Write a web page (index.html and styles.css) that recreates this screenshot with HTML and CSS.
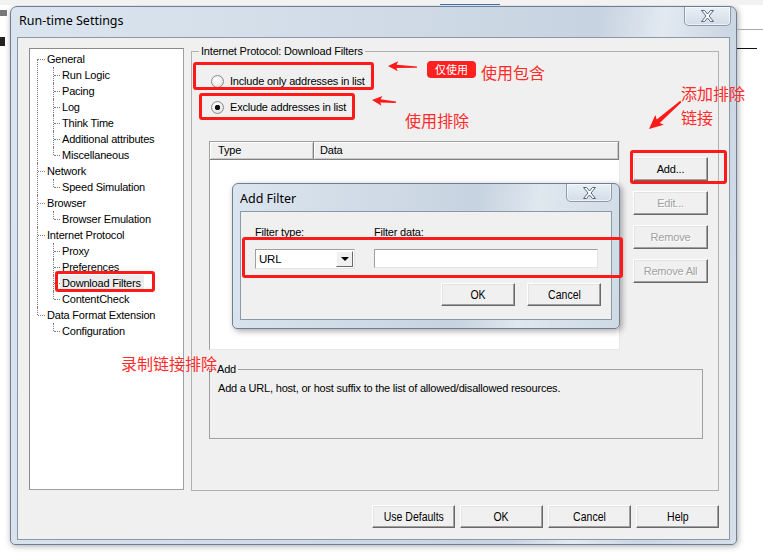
FILE: index.html
```html
<!DOCTYPE html>
<html lang="en">
<head>
<meta charset="utf-8">
<title>Run-time Settings</title>
<link rel="stylesheet" href="styles.css">
</head>
<body>
<div class="screen">
  <div class="bg-top"></div>
  <div class="bg-mark bg-mark1"></div>
  <div class="bg-mark bg-mark2"></div>
  <div class="bg-line bg-line1"></div>
  <div class="bg-line bg-line2"></div>
  <div class="bg-blue"></div>

  <div class="window">
    <div class="titlebar">
      <span class="title">Run-time Settings</span>
      <span class="close">
        <svg width="15" height="12" viewBox="0 0 15 12"><polygon points="1.5,0.5 4.5,0.5 7.5,4 10.5,0.5 13.5,0.5 9,6 13.5,11.5 10.5,11.5 7.5,8 4.5,11.5 1.5,11.5 6,6" fill="#fff" stroke="#55657a" stroke-width="1"/></svg>
      </span>
    </div>
    <div class="client">
      <div class="main">
        <div class="tree">
          <ul class="root">
            <li><span class="lbl">General</span>
              <ul class="sub">
                <li><span class="lbl">Run Logic</span></li>
                <li><span class="lbl">Pacing</span></li>
                <li><span class="lbl">Log</span></li>
                <li><span class="lbl">Think Time</span></li>
                <li><span class="lbl">Additional attributes</span></li>
                <li><span class="lbl">Miscellaneous</span></li>
              </ul>
            </li>
            <li><span class="lbl">Network</span>
              <ul class="sub">
                <li><span class="lbl">Speed Simulation</span></li>
              </ul>
            </li>
            <li><span class="lbl">Browser</span>
              <ul class="sub">
                <li><span class="lbl">Browser Emulation</span></li>
              </ul>
            </li>
            <li><span class="lbl">Internet Protocol</span>
              <ul class="sub">
                <li><span class="lbl">Proxy</span></li>
                <li><span class="lbl">Preferences</span></li>
                <li><span class="lbl selected">Download Filters</span></li>
                <li><span class="lbl">ContentCheck</span></li>
              </ul>
            </li>
            <li><span class="lbl">Data Format Extension</span>
              <ul class="sub">
                <li><span class="lbl">Configuration</span></li>
              </ul>
            </li>
          </ul>
        </div>

        <fieldset class="group">
          <legend>Internet Protocol: Download Filters</legend>
          <div class="radios">
            <div class="radio"><span class="dot"></span><span>Include only addresses in list</span></div>
            <div class="radio"><span class="dot checked"></span><span>Exclude addresses in list</span></div>
          </div>
          <div class="listrow">
            <div class="list">
              <div class="lhead">
                <div class="col col-type">Type</div>
                <div class="col col-data">Data</div>
              </div>
            </div>
            <div class="side">
              <div class="btn side-btn">Add...</div>
              <div class="btn side-btn disabled">Edit...</div>
              <div class="btn side-btn disabled">Remove</div>
              <div class="btn side-btn disabled">Remove All</div>
            </div>
          </div>
          <fieldset class="addgroup">
            <legend>Add</legend>
            <p class="desc">Add a URL, host, or host suffix to the list of allowed/disallowed resources.</p>
          </fieldset>
        </fieldset>
      </div>
      <div class="footer">
        <div class="btn foot-btn"><span class="narrow">Use Defaults</span></div>
        <div class="btn foot-btn"><span class="narrow">OK</span></div>
        <div class="btn foot-btn"><span class="narrow">Cancel</span></div>
        <div class="btn foot-btn"><span class="narrow">Help</span></div>
      </div>
    </div>
  </div>

  <div class="dialog">
    <div class="titlebar dtitlebar">
      <span class="title dtitle">Add Filter</span>
      <span class="close dclose">
        <svg width="15" height="12" viewBox="0 0 15 12"><polygon points="1.5,0.5 4.5,0.5 7.5,4 10.5,0.5 13.5,0.5 9,6 13.5,11.5 10.5,11.5 7.5,8 4.5,11.5 1.5,11.5 6,6" fill="#fff" stroke="#55657a" stroke-width="1"/></svg>
      </span>
    </div>
    <div class="dclient">
      <div class="fields">
        <span class="flabel">Filter <u>t</u>ype:</span>
        <span class="flabel">Filter <u>d</u>ata:</span>
        <div class="select"><span class="sval">URL</span><span class="sarrow"><span class="tri"></span></span></div>
        <div class="input"></div>
      </div>
      <div class="dbuttons">
        <div class="btn dbtn"><span class="narrow">OK</span></div>
        <div class="btn dbtn"><span class="narrow">Cancel</span></div>
      </div>
    </div>
  </div>

  <div class="mark box-include"></div>
  <div class="mark box-exclude"></div>
  <div class="mark box-tree"></div>
  <div class="mark box-add"></div>
  <div class="mark box-fields"></div>

  <div class="badge">仅使用</div>
  <div class="note note-include">使用包含</div>
  <div class="note note-exclude">使用排除</div>
  <div class="note note-add1">添加排除</div>
  <div class="note note-add2">链接</div>
  <div class="note note-record">录制链接排除</div>

  <svg class="arrows" width="763" height="560" viewBox="0 0 763 560">
    <g fill="#ff1a1a">
      <polygon transform="translate(388,66) rotate(2)" points="0,0 10,-5 8.5,-1.5 29,-0.6 29,0.8 8.5,1.7 10,5"/>
      <polygon transform="translate(372,100) rotate(5)" points="0,0 10,-5 8.5,-1.5 24,-0.6 24,0.8 8.5,1.7 10,5"/>
      <polygon transform="translate(649,129) rotate(-41)" points="0,0 14,-6.5 12,-2 42,-0.8 42,1.2 12,2.6 14,6.5"/>
    </g>
  </svg>
</div>
</body>
</html>
```
FILE: styles.css
```css
html, body {
  margin: 0;
  padding: 0;
  background: #ffffff;
}

.screen {
  position: relative;
  width: 763px;
  height: 560px;
  overflow: hidden;
  box-sizing: border-box;
  padding: 6px 0 0 10px;
  font-family: "Liberation Sans", Arial, sans-serif;
  font-size: 11px;
  letter-spacing: -0.2px;
  color: #000;
}

/* background fragments of other windows */
.bg-top {
  position: absolute;
  left: 0; top: 0;
  width: 763px; height: 5px;
  background: #f2f2f2;
}
.bg-blue {
  position: absolute;
  left: 440px; top: 4px;
  width: 60px; height: 1px;
  background: #3d6fb0;
}
.bg-mark {
  position: absolute;
  background: #444;
}
.bg-mark1 { left: 0; top: 10px; width: 7px; height: 6px; background: #777; }
.bg-mark2 { left: 0; top: 37px; width: 5px; height: 9px; background: #222; }
.bg-line {
  position: absolute;
  left: 737px;
  width: 26px;
  height: 1px;
}
.bg-line1 { top: 29px; background: #a8a8a8; }
.bg-line2 { top: 48px; background: #111; width: 20px; }

/* main window */
.window {
  width: 727px;
  height: 539px;
  box-sizing: border-box;
  border: 1px solid #6f7e90;
  border-radius: 7px 7px 5px 5px;
  background: linear-gradient(100deg, #dbe5ef 0%, #d0dbe7 45%, #c7d3e0 72%, #e2e9f1 80%, #cbd7e3 88%, #d6e0ea 100%);
  box-shadow: 1px 1px 6px rgba(0, 0, 0, 0.35);
  display: flex;
  flex-direction: column;
}

.titlebar {
  height: 30px;
  flex: none;
  display: flex;
  justify-content: space-between;
  align-items: flex-start;
}

.title {
  font-family: "Noto Sans", "Open Sans", sans-serif;
  font-size: 12.5px;
  letter-spacing: 0;
  line-height: 16px;
  padding: 6px 0 0 8px;
  color: #000;
}

.close {
  width: 47px;
  height: 19px;
  box-sizing: border-box;
  margin-right: 5px;
  border: 1px solid #8d9aaa;
  border-top: none;
  border-radius: 0 0 5px 5px;
  background: linear-gradient(#e9eff6, #d3dde8);
  box-shadow: inset 0 0 0 1px rgba(255, 255, 255, 0.6);
  display: flex;
  align-items: center;
  justify-content: center;
}

.client {
  flex: 1;
  margin: 0 6px 4px 6px;
  border: 1px solid #8b98a7;
  background: #f0f0f0;
  padding: 7px 0 0 11px;
  display: flex;
  flex-direction: column;
}

.main {
  display: flex;
  align-items: flex-start;
}

/* tree */
.tree {
  width: 155px;
  height: 442px;
  box-sizing: border-box;
  margin-top: 3px;
  background: #fff;
  border: 1px solid #a0a0a0;
  border-top-color: #8a8a8a;
  border-left-color: #8a8a8a;
  padding: 2px 0 0 7px;
}

.tree ul {
  list-style: none;
  margin: 0;
  padding: 0;
}

.tree li {
  position: relative;
  line-height: 16px;
  white-space: nowrap;
}

.tree .root > li { padding-left: 10px; }
.tree .sub { margin-left: 6px; }
.tree .sub > li { padding-left: 9px; }

.tree li::before {
  content: "";
  position: absolute;
  left: 0;
  top: 0;
  bottom: 0;
  border-left: 1px dotted #7a7a7a;
}
.tree .root > li:first-child::before { top: 8px; }
.tree li:last-child::before { bottom: auto; height: 8px; }

.tree li::after {
  content: "";
  position: absolute;
  left: 1px;
  top: 8px;
  width: 7px;
  border-top: 1px dotted #7a7a7a;
}
.tree .sub > li::after { width: 6px; }

.lbl { display: inline-block; }
.lbl.selected {
  background: #ececec;
  margin-left: -2px;
  padding: 0 3px 0 2px;
}

/* group */
.group {
  margin: 0 0 0 7px;
  padding: 0;
  width: 528px;
  height: 446px;
  box-sizing: border-box;
  border: 1px solid #b0b0b0;
  min-width: 0;
}

.group > legend,
.addgroup > legend {
  line-height: 12px;
  padding: 0 2px;
  margin-left: 7px;
}

.radios {
  padding: 16px 0 0 19px;
  display: flex;
  flex-direction: column;
  gap: 10px;
}

.radio {
  height: 16px;
  display: flex;
  align-items: center;
  gap: 6px;
}

.dot {
  width: 13px;
  height: 13px;
  box-sizing: border-box;
  border-radius: 50%;
  border: 1px solid #8a8a8a;
  background: radial-gradient(circle at 40% 35%, #ffffff 0%, #f4f4f4 40%, #d4d4d4 100%);
}
.dot.checked {
  background: radial-gradient(circle, #111 0 2.4px, transparent 3px),
              radial-gradient(circle at 40% 35%, #ffffff 0%, #f4f4f4 40%, #d4d4d4 100%);
}

.listrow {
  display: flex;
  align-items: flex-start;
  margin: 26px 0 0 17px;
}

.list {
  width: 411px;
  height: 209px;
  box-sizing: border-box;
  background: #fff;
  border: 1px solid #a0a0a0;
  border-right-color: #e8e8e8;
  border-bottom-color: #e8e8e8;
}

.lhead {
  display: flex;
  height: 18px;
}

.col {
  box-sizing: border-box;
  height: 18px;
  line-height: 16px;
  background: #f0f0f0;
  border-right: 1px solid #808080;
  border-bottom: 1px solid #808080;
  box-shadow: inset 1px 1px #fff, inset -1px -1px #c8c8c8;
  padding-left: 8px;
}
.col-type { width: 104px; }
.col-data { flex: 1; padding-left: 6px; }

.side {
  margin: 16px 0 0 13px;
  display: flex;
  flex-direction: column;
  gap: 10px;
}

.btn {
  box-sizing: border-box;
  background: #f0f0f0;
  border: 1px solid;
  border-color: #fff #696969 #696969 #fff;
  box-shadow: inset -1px -1px #a0a0a0, inset 1px 1px #e3e3e3;
  display: flex;
  align-items: center;
  justify-content: center;
  color: #000;
}

.side-btn {
  width: 75px;
  height: 24px;
}

.btn.disabled {
  color: #a0a0a0;
  text-shadow: 1px 1px #fff;
}

.addgroup {
  margin: 13px 0 0 17px;
  padding: 0;
  width: 494px;
  height: 76px;
  box-sizing: border-box;
  border: 1px solid #a0a0a0;
  min-width: 0;
}
.addgroup > legend {
  margin-left: 5px;
  padding: 0 2px;
}

.desc {
  margin: 0;
  padding: 5px 0 0 8px;
  line-height: 16px;
}

.footer {
  display: flex;
  justify-content: flex-end;
  gap: 5px;
  margin-top: 14px;
  padding-right: 10px;
}

.foot-btn {
  width: 83px;
  height: 23px;
}

.narrow {
  display: inline-block;
  font-size: 12.5px;
  letter-spacing: 0;
  transform: scaleX(0.84);
}

/* Add Filter dialog */
.dialog {
  position: absolute;
  left: 232px;
  top: 183px;
  width: 388px;
  height: 146px;
  box-sizing: border-box;
  border: 1px solid #6f7e90;
  border-radius: 6px 6px 5px 5px;
  background: linear-gradient(100deg, #dbe5ef 0%, #ced9e5 40%, #c7d3e0 60%, #dfe7ef 75%, #cfdae5 100%);
  box-shadow: 2px 2px 6px rgba(0, 0, 0, 0.35);
  display: flex;
  flex-direction: column;
}

.dtitlebar { height: 27px; }
.dtitle { padding: 7px 0 0 7px; }
.dclose {
  width: 46px;
  height: 18px;
  margin-right: 7px;
}

.dclient {
  flex: 1;
  margin: 0 7px 8px 7px;
  border: 1px solid #8b98a7;
  background: #f0f0f0;
  padding: 13px 10px 0 14px;
  display: flex;
  flex-direction: column;
}

.fields {
  display: grid;
  grid-template-columns: 100px 224px;
  column-gap: 19px;
  row-gap: 10px;
}

.flabel {
  line-height: 14px;
  height: 14px;
}
.flabel u { text-decoration: underline; }

.select {
  height: 20px;
  box-sizing: border-box;
  background: #fff;
  border: 1px solid #a0a0a0;
  border-bottom-color: #e3e3e3;
  border-right-color: #e3e3e3;
  display: flex;
  align-items: center;
}
.sval {
  flex: 1;
  padding-left: 3px;
  font-size: 11.5px;
}
.sarrow {
  width: 17px;
  height: 16px;
  box-sizing: border-box;
  margin-right: 1px;
  background: #f0f0f0;
  border: 1px solid;
  border-color: #fff #696969 #696969 #fff;
  display: flex;
  align-items: center;
  justify-content: center;
}
.tri {
  width: 0;
  height: 0;
  border-left: 4px solid transparent;
  border-right: 4px solid transparent;
  border-top: 4px solid #000;
}

.input {
  height: 19px;
  box-sizing: border-box;
  background: #fff;
  border: 1px solid #a0a0a0;
  border-bottom-color: #e3e3e3;
  border-right-color: #e3e3e3;
}

.dbuttons {
  display: flex;
  justify-content: flex-end;
  gap: 12px;
  margin-top: 14px;
}
.dbtn {
  width: 74px;
  height: 23px;
}

/* annotations */
.mark {
  position: absolute;
  box-sizing: border-box;
  border: 3px solid #ff1a1a;
  border-radius: 3px;
}
.box-include { left: 193px; top: 62px; width: 181px; height: 28px; }
.box-exclude { left: 199px; top: 93px; width: 156px; height: 27px; }
.box-tree { left: 55px; top: 271px; width: 100px; height: 21px; }
.box-add { left: 630px; top: 150px; width: 97px; height: 34px; }
.box-fields { left: 242px; top: 237px; width: 381px; height: 41px; }

.badge {
  position: absolute;
  left: 427px;
  top: 61px;
  width: 49px;
  height: 17px;
  border-radius: 4px;
  background: #ff2020;
  color: #fff;
  font-family: "Noto Sans CJK SC", sans-serif;
  font-size: 11px;
  letter-spacing: 0;
  line-height: 17px;
  text-align: center;
  overflow: hidden;
}

.note {
  position: absolute;
  font-family: "Noto Sans CJK SC", sans-serif;
  font-size: 16px;
  letter-spacing: 0;
  line-height: 16px;
  color: #ff2b2b;
  white-space: nowrap;
}
.note-include { left: 481px; top: 64px; }
.note-exclude { left: 405px; top: 112px; }
.note-add1 { left: 681px; top: 85px; }
.note-add2 { left: 681px; top: 109px; }
.note-record { left: 121px; top: 355px; }

.arrows {
  position: absolute;
  left: 0;
  top: 0;
  pointer-events: none;
}
```
